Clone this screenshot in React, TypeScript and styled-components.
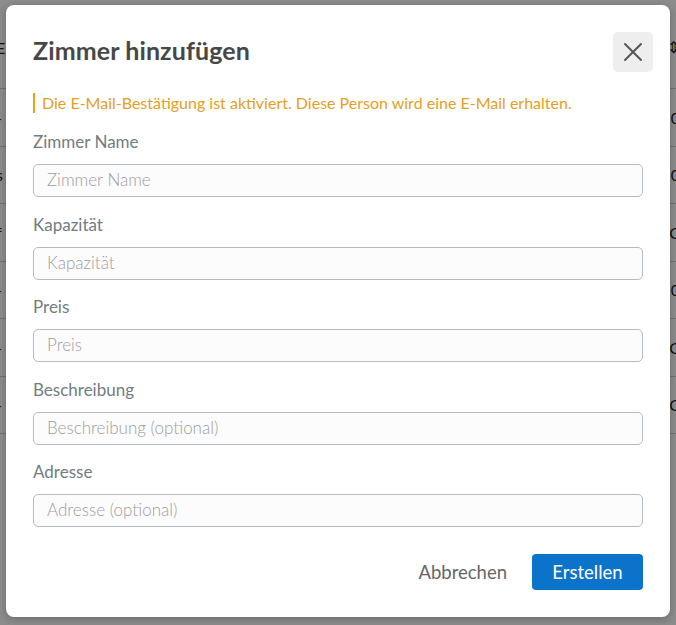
import styled, { createGlobalStyle } from 'styled-components'

const GlobalStyle = createGlobalStyle`
  html, body {
    margin: 0;
    padding: 0;
    background: #fff;
  }
  body {
    font-family: Lato, 'Open Sans', Arial, sans-serif;
    width: 676px;
    height: 625px;
    overflow: hidden;
  }
`

const Page = styled.div`
  position: relative;
  width: 676px;
  height: 625px;
  background: #fff;
  overflow: hidden;
`

const Table = styled.div`
  display: flex;
  flex-direction: column;
`

const HeadRow = styled.div`
  box-sizing: border-box;
  display: flex;
  justify-content: space-between;
  align-items: center;
  height: 89px;
  padding-top: 6px;
  border-bottom: 1px solid #ccc;
  color: #222;
  font-size: 16px;
`

const Row = styled.div`
  box-sizing: border-box;
  display: flex;
  justify-content: space-between;
  align-items: center;
  height: 57.5px;
  border-bottom: 1px solid #ccc;
  color: #222;
  font-size: 16px;
`

const Cell = styled.span`
  margin: 0 -4px;
`

const Overlay = styled.div`
  position: absolute;
  inset: 0;
  background: rgba(0, 0, 0, 0.45);
  display: flex;
  align-items: flex-start;
  justify-content: center;
`

const Dialog = styled.div`
  width: 664px;
  height: 612px;
  margin-top: 5px;
  box-sizing: border-box;
  padding: 27px 27px;
  background: #fff;
  border-radius: 8px;
  box-shadow: 0 2px 8px rgba(0, 0, 0, 0.25);
  display: flex;
  flex-direction: column;
`

const Header = styled.div`
  display: flex;
  justify-content: space-between;
  align-items: center;
  height: 40px;
`

const Title = styled.h2`
  margin: 0 0 5px;
  font-size: 25px;
  line-height: 30px;
  font-weight: 700;
  color: #474747;
  letter-spacing: 0.1px;
`

const CloseButton = styled.button`
  width: 40px;
  height: 40px;
  margin-right: -10px;
  border: none;
  border-radius: 5px;
  background: #eeeeee;
  display: flex;
  align-items: center;
  justify-content: center;
  padding: 0;
  cursor: pointer;
`

const Notice = styled.div`
  margin-top: 21px;
  border-left: 2px solid #e8a21e;
  padding-left: 7px;
  line-height: 20px;
  font-size: 16px;
  color: #e5a021;
`

const Form = styled.div`
  display: flex;
  flex-direction: column;
  gap: 17.5px;
  margin-top: 19px;
`

const Field = styled.label`
  display: flex;
  flex-direction: column;
  gap: 12px;
`

const LabelText = styled.span`
  font-size: 17px;
  line-height: 20px;
  color: #717d82;
`

const Input = styled.input`
  box-sizing: border-box;
  width: 100%;
  height: 33px;
  padding: 0 13px 2px;
  border: 1px solid #b4bcc2;
  border-radius: 5px;
  background: #fcfcfc;
  font-family: inherit;
  font-size: 17px;
  color: #333;
  outline: none;

  &::placeholder {
    color: #9c9c9c;
    font-weight: 300;
  }
`

const Footer = styled.div`
  margin-top: auto;
  display: flex;
  justify-content: flex-end;
  align-items: center;
  gap: 13px;
`

const TextButton = styled.button`
  border: none;
  background: transparent;
  font-family: inherit;
  font-size: 18.5px;
  color: #666;
  padding: 0 12px;
  height: 36px;
  cursor: pointer;
`

const PrimaryButton = styled.button`
  width: 111px;
  height: 36px;
  border: none;
  border-radius: 4px;
  background: #0c73cb;
  color: #fff;
  font-family: inherit;
  font-size: 18.5px;
  cursor: pointer;
`

const fields = [
  { label: 'Zimmer Name', placeholder: 'Zimmer Name' },
  { label: 'Kapazität', placeholder: 'Kapazität' },
  { label: 'Preis', placeholder: 'Preis' },
  { label: 'Beschreibung', placeholder: 'Beschreibung (optional)' },
  { label: 'Adresse', placeholder: 'Adresse (optional)' },
]

const rows = [
  ['-', '0'],
  ['s', '0'],
  ['f', 'C'],
  ['-', '0'],
  ['-', 'C'],
  ['-', 'C'],
]

const App = () => {
  return (
    <>
      <GlobalStyle />
      <Page>
        <Table>
          <HeadRow>
            <Cell>E</Cell>
            <Cell>⇕</Cell>
          </HeadRow>
          {rows.map((r, i) => (
            <Row key={i}>
              <Cell>{r[0]}</Cell>
              <Cell>{r[1]}</Cell>
            </Row>
          ))}
        </Table>
        <Overlay>
          <Dialog>
            <Header>
              <Title>Zimmer hinzufügen</Title>
              <CloseButton aria-label="close">
                <svg width="20" height="20" viewBox="0 0 20 20">
                  <path
                    d="M2 2 L18 18 M18 2 L2 18"
                    stroke="#555"
                    strokeWidth="2"
                    strokeLinecap="round"
                  />
                </svg>
              </CloseButton>
            </Header>
            <Notice>
              Die E-Mail-Bestätigung ist aktiviert. Diese Person wird eine
              E-Mail erhalten.
            </Notice>
            <Form>
              {fields.map((f) => (
                <Field key={f.label}>
                  <LabelText>{f.label}</LabelText>
                  <Input placeholder={f.placeholder} />
                </Field>
              ))}
            </Form>
            <Footer>
              <TextButton>Abbrechen</TextButton>
              <PrimaryButton>Erstellen</PrimaryButton>
            </Footer>
          </Dialog>
        </Overlay>
      </Page>
    </>
  )
}

export default App
